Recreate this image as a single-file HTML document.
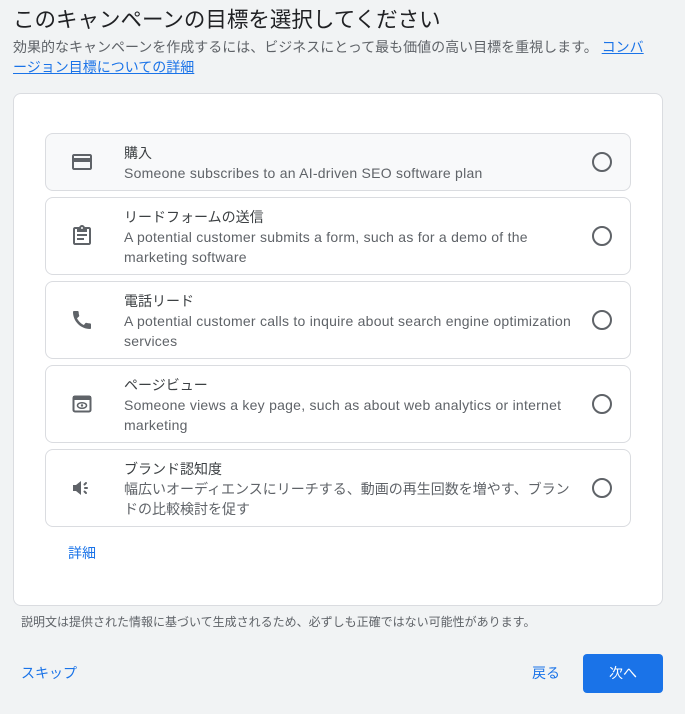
<!DOCTYPE html>
<html><head><meta charset="utf-8"><style>
*{box-sizing:border-box;margin:0;padding:0}
body{width:685px;height:714px;background:#f1f3f4;font-family:"Liberation Sans","Noto Sans CJK JP",sans-serif;color:#202124;position:relative;overflow:hidden}
.abs{position:absolute}
h1{position:absolute;left:13px;top:3px;font-size:21.5px;font-weight:400;color:#202124;white-space:nowrap}
.sub{left:13px;top:37px;width:640px;font-size:14px;line-height:20px;color:#5f6368}
.sub a{color:#1a73e8;text-decoration:underline}
.card{left:13px;top:93px;width:650px;height:513px;background:#fff;border:1px solid #dadce0;border-radius:8px}
.opt{position:absolute;left:45px;width:586px;border:1px solid #dadce0;border-radius:8px;background:#fff}
.opt.sel{background:#f8f9fa}
.ic{position:absolute;left:24px;width:24px;height:24px}
.tx{position:absolute;left:78px;top:9px;width:455px;font-size:14px;line-height:20px;color:#3c4043}
.tx .d{color:#5f6368;font-size:14px;letter-spacing:0.25px}
.rad{position:absolute;left:546px;width:20px;height:20px;border:2px solid #5f6368;border-radius:50%}
.link{color:#1a73e8;font-size:14px}
</style></head><body>
<h1>このキャンペーンの目標を選択してください</h1>
<div class="abs sub">効果的なキャンペーンを作成するには、ビジネスにとって最も価値の高い目標を重視します。 <a>コンバージョン目標についての詳細</a></div>
<div class="abs card"></div>

<div class="opt sel" style="top:133px;height:58px">
<svg class="ic" style="top:16px" viewBox="0 0 24 24"><path fill="#5f6368" d="M20 4H4c-1.1 0-2 .9-2 2v12c0 1.1.9 2 2 2h16c1.1 0 2-.9 2-2V6c0-1.1-.9-2-2-2zm0 14H4v-6h16v6zm0-10H4V6h16v2z"/></svg>
<div class="tx">購入<br><span class="d">Someone subscribes to an AI-driven SEO software plan</span></div>
<div class="rad" style="top:18px"></div></div>

<div class="opt" style="top:197px;height:78px">
<svg class="ic" style="top:26px" viewBox="0 0 24 24"><path fill="#5f6368" d="M19 3h-4.18C14.4 1.84 13.3 1 12 1s-2.4.84-2.82 2H5c-1.1 0-2 .9-2 2v14c0 1.1.9 2 2 2h14c1.1 0 2-.9 2-2V5c0-1.1-.9-2-2-2zm-7 0c.55 0 1 .45 1 1s-.45 1-1 1-1-.45-1-1 .45-1 1-1zm7 16H5V5h2v3h10V5h2v14zM7 10h10v2H7zm0 4h7v2H7z"/></svg>
<div class="tx">リードフォームの送信<br><span class="d">A potential customer submits a form, such as for a demo of the marketing software</span></div>
<div class="rad" style="top:28px"></div></div>

<div class="opt" style="top:281px;height:78px">
<svg class="ic" style="top:26px" viewBox="0 0 24 24"><path fill="#5f6368" d="M20.01 15.38c-1.23 0-2.420-.2-3.53-.56a.98.98 0 0 0-1.01.24l-1.57 1.97c-2.83-1.35-5.48-3.9-6.89-6.83l1.950-1.66c.27-.28.35-.67.24-1.020-.37-1.11-.56-2.3-.56-3.53 0-.54-.45-.99-.99-.99H4.19C3.65 3 3 3.24 3 3.99 3 13.28 10.73 21 20.01 21c.71 0 .99-.63.99-1.18v-3.45c0-.54-.45-.99-.99-.99z"/></svg>
<div class="tx">電話リード<br><span class="d">A potential customer calls to inquire about search engine optimization services</span></div>
<div class="rad" style="top:28px"></div></div>

<div class="opt" style="top:365px;height:78px">
<svg class="ic" style="top:26px" viewBox="0 0 24 24"><rect x="3.5" y="4.5" width="17" height="15" rx="1.5" fill="none" stroke="#5f6368" stroke-width="2"/><rect x="3" y="4" width="18" height="4" fill="#5f6368"/><ellipse cx="12" cy="13.5" rx="4.5" ry="2.8" fill="none" stroke="#5f6368" stroke-width="1.5"/><circle cx="12" cy="13.5" r="1.2" fill="#5f6368"/></svg>
<div class="tx">ページビュー<br><span class="d">Someone views a key page, such as about web analytics or internet marketing</span></div>
<div class="rad" style="top:28px"></div></div>

<div class="opt" style="top:449px;height:78px">
<svg class="ic" style="top:26px" viewBox="0 0 24 24"><path fill="#5f6368" d="M3 9v6h3l5 4V5L6 9H3z"/><path stroke="#5f6368" stroke-width="2" stroke-linecap="round" d="M14.5 8.5l1.5-1.5M14.5 15.5l1.5 1.5M15 12h2"/></svg>
<div class="tx" style="width:454px">ブランド認知度<br><span class="d" style="letter-spacing:0">幅広いオーディエンスにリーチする、動画の再生回数を増やす、ブランドの比較検討を促す</span></div>
<div class="rad" style="top:28px"></div></div>

<div class="abs link" style="left:68px;top:543px">詳細</div>
<div class="abs" style="left:21px;top:613px;font-size:12px;color:#5f6368">説明文は提供された情報に基づいて生成されるため、必ずしも正確ではない可能性があります。</div>
<div class="abs link" style="left:21px;top:663px">スキップ</div>
<div class="abs link" style="left:532px;top:663px">戻る</div>
<div class="abs" style="left:583px;top:654px;width:80px;height:39px;background:#1a73e8;border-radius:4px;color:#fff;font-size:14px;text-align:center;line-height:39px">次へ</div>
</body></html>
